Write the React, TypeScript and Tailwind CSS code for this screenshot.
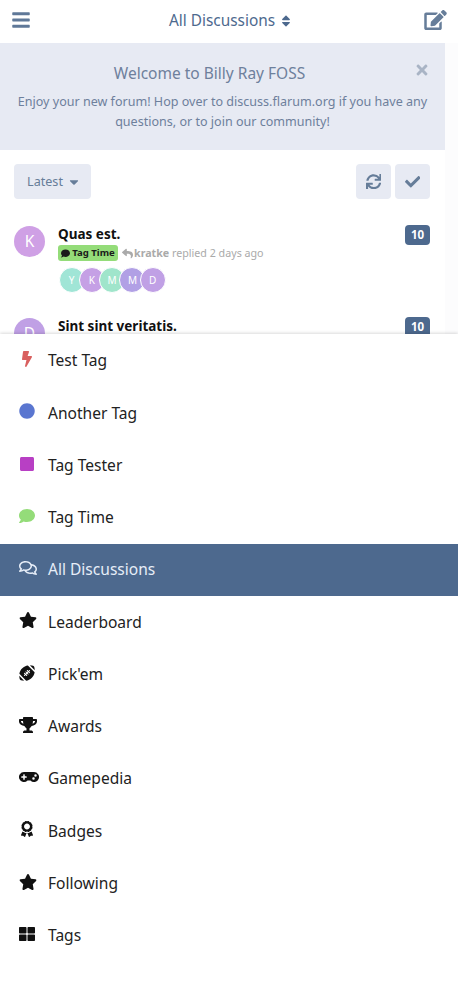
import type { IconType } from "react-icons";
import {
  FaAward,
  FaBars,
  FaBolt,
  FaCaretDown,
  FaCheck,
  FaCircle,
  FaComment,
  FaEdit,
  FaFootballBall,
  FaGamepad,
  FaRegComments,
  FaReply,
  FaSort,
  FaSquare,
  FaStar,
  FaSync,
  FaThLarge,
  FaTimes,
  FaTrophy,
} from "react-icons/fa";
import { clsx } from "clsx";

type NavItem = {
  label: string;
  icon: IconType;
  width?: string;
  color?: string;
  active?: boolean;
};

// Some glyphs are wider than the 16px icon slot
const navItems: NavItem[] = [
  { label: "Test Tag", icon: FaBolt, color: "text-[#d9605f]" },
  { label: "Another Tag", icon: FaCircle, color: "text-[#5a76d0]" },
  { label: "Tag Tester", icon: FaSquare, color: "text-[#b83fc4]" },
  { label: "Tag Time", icon: FaComment, color: "text-[#94dc79]" },
  { label: "All Discussions", icon: FaRegComments, width: "w-[18px]", active: true },
  { label: "Leaderboard", icon: FaStar, width: "w-[18px]" },
  { label: "Pick'em", icon: FaFootballBall },
  { label: "Awards", icon: FaTrophy, width: "w-[18px]" },
  { label: "Gamepedia", icon: FaGamepad, width: "w-[20px]" },
  { label: "Badges", icon: FaAward },
  { label: "Following", icon: FaStar, width: "w-[18px]" },
  { label: "Tags", icon: FaThLarge },
];

const participants = [
  { initial: "Y", color: "bg-[#a0e5d6]" },
  { initial: "K", color: "bg-[#c5a0e5]" },
  { initial: "M", color: "bg-[#a0e5cb]" },
  { initial: "M", color: "bg-[#b1a0e5]" },
  { initial: "D", color: "bg-[#c0a0e5]" },
];

function Header() {
  return (
    <header className="flex h-[43px] items-center justify-between pl-[12px] pr-[11px] pb-[3px] text-[#4d698e]">
      <FaBars className="h-[20px] w-[18px] text-[#5f7898]" />
      <div className="flex items-center gap-[4px] pl-[8px] pt-px">
        <span className="text-[15.4px]">All Discussions</span>
        <FaSort className="mt-px size-[14px]" />
      </div>
      <FaEdit className="h-[20px] w-[23px] text-[#667d99]" />
    </header>
  );
}

function WelcomeHero() {
  return (
    <section className="flex h-[107px] w-[445px] flex-col items-center bg-[#e7eaf3] pt-[18px] text-[#6e809c]">
      <div className="relative w-full text-center">
        <h2 className="pr-[26px] text-[15.5px] leading-[24px]">Welcome to Billy Ray FOSS</h2>
        <FaTimes className="absolute right-[15px] top-px size-[16px] text-[#a9b4c5]" />
      </div>
      <p className="mt-[7px] whitespace-nowrap text-center text-[12.55px] leading-[19.5px]">
        Enjoy your new forum! Hop over to discuss.flarum.org if you have any
        <br />
        questions, or to join our community!
      </p>
    </section>
  );
}

function Toolbar() {
  return (
    <div className="flex h-[35px] shrink-0 text-[#667d99]">
      <button className="flex w-[77px] items-center justify-center gap-[4px] rounded-[4px] bg-[#e7eaf3] pl-[3px] pt-px text-[12.6px]">
        Latest
        <FaCaretDown className="size-[14px]" />
      </button>
      <button className="ml-auto flex w-[35px] items-center justify-center rounded-[4px] bg-[#e7eaf3]">
        <FaSync className="size-[15.5px]" />
      </button>
      <button className="ml-[4px] flex w-[35px] items-center justify-center rounded-[4px] bg-[#e7eaf3]">
        <FaCheck className="size-[15.5px]" />
      </button>
    </div>
  );
}

function Discussion({ initial, color, title }: { initial: string; color: string; title: string }) {
  return (
    <article className="flex h-[92px] shrink-0">
      <div className={clsx("mt-[2px] flex size-[31px] shrink-0 items-center justify-center rounded-full text-[15.5px] text-white", color)}>
        {initial}
      </div>
      <div className="ml-[13px] flex-1">
        <h3 className="text-[13.5px] font-bold leading-[20px] text-[#111]">{title}</h3>
        <div className="mt-px flex h-[16px] items-center text-[10.7px] text-[#aaa]">
          <span className="flex h-[16px] w-[60px] items-center justify-center gap-[2px] rounded-[3px] bg-[#94dc79] text-[9.6px] font-bold text-[#1a1a1a]">
            <FaComment className="size-[9px]" />
            Tag Time
          </span>
          <FaReply className="ml-[4px] size-[11px]" />
          <span className="ml-px">
            <b>kratke</b> replied 2 days ago
          </span>
        </div>
        <div className="mt-[6px] flex pl-[0.5px]">
          {participants.map((user, index) => (
            <span
              key={index}
              className={clsx(
                "-mr-[5.7px] flex size-[26px] items-center justify-center rounded-full border-[1.5px] border-white text-[10px] text-white",
                user.color
              )}
            >
              {user.initial}
            </span>
          ))}
        </div>
      </div>
      <span className="mt-px flex h-[20px] w-[25px] items-center justify-center rounded-[4px] bg-[#4d698e] text-[11.5px] font-bold text-white">
        10
      </span>
    </article>
  );
}

function NavSheet() {
  return (
    <nav className="relative flex-1 bg-white pt-px shadow-[0_-1px_3px_rgba(0,0,0,0.15)]">
      {navItems.map(({ label, icon: Icon, width, color, active }) => (
        <a
          key={label}
          className={clsx(
            "flex h-[52.25px] items-center pl-[19px] text-[15.55px]",
            active ? "bg-[#4d698e] text-[#e7eef8]" : "text-[#222]"
          )}
        >
          <span className={clsx("mb-[4px] flex w-[29px] shrink-0", !active && (color ?? "text-[#111]"))}>
            <Icon className={clsx("h-4 shrink-0", width ?? "w-4")} />
          </span>
          {label}
        </a>
      ))}
    </nav>
  );
}

export default function App() {
  return (
    <div className="flex h-[1000px] w-[458px] flex-col overflow-hidden bg-white font-['Noto_Sans',sans-serif]">
      <div className="h-[334px] shrink-0 overflow-hidden">
        <Header />
        <div className="bg-[#fcfcfd]">
          <WelcomeHero />
          <main className="flex h-[184px] w-[445px] flex-col bg-white pl-[14px] pr-[15px] pt-[14px]">
            <Toolbar />
            <div className="mt-[25px]">
              <Discussion initial="K" color="bg-[#cfa0e5]" title="Quas est." />
              <Discussion initial="D" color="bg-[#c0a0e5]" title="Sint sint veritatis." />
            </div>
          </main>
        </div>
      </div>
      <NavSheet />
    </div>
  );
}
